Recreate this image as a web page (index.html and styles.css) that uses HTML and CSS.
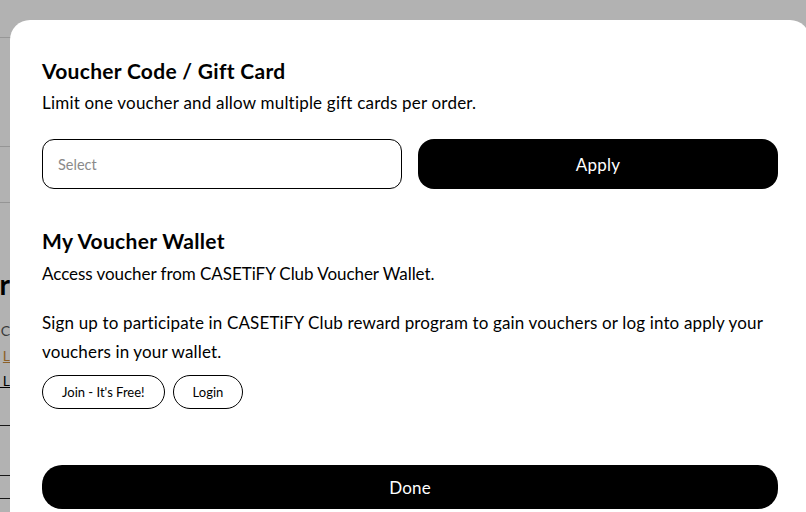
FILE: index.html
```html
<!DOCTYPE html>
<html>
<head>
<meta charset="utf-8">
<link rel="stylesheet" href="styles.css">
</head>
<body>
<div class="page">
  <div class="page-header"></div>
  <div class="page-strip">
    <div class="rule rule-light r1"></div>
    <div class="rule rule-light r2"></div>
    <div class="clip big"><span>Your Order Summar</span></div>
    <div class="clip small g1"><span>Sign in to your C</span></div>
    <div class="clip small g2"><span>or <u>L</u></span></div>
    <div class="clip small g3"><span><u>Login L</u></span></div>
    <div class="rule rule-dark r3"></div>
    <div class="rule rule-dark r4"></div>
    <div class="rule rule-dark r5"></div>
  </div>
</div>
<div class="overlay"></div>
<div class="modal">
  <h2 class="title">Voucher Code / Gift Card</h2>
  <p class="sub">Limit one voucher and allow multiple gift cards per order.</p>
  <div class="code-row">
    <div class="input"><span class="placeholder">Select</span></div>
    <button class="btn-black apply">Apply</button>
  </div>
  <h2 class="title title2">My Voucher Wallet</h2>
  <p class="sub sub2">Access voucher from CASETiFY Club Voucher Wallet.</p>
  <p class="para">Sign up to participate in CASETiFY Club reward program to gain vouchers or log into apply your vouchers in your wallet.</p>
  <div class="pills">
    <button class="pill">Join - It's Free!</button>
    <button class="pill">Login</button>
  </div>
  <button class="btn-black done">Done</button>
</div>
</body>
</html>
```
FILE: styles.css
```css
html, body {
  margin: 0;
  padding: 0;
  width: 806px;
  height: 512px;
  overflow: hidden;
  background: #fff;
  font-family: Lato, "Noto Sans", sans-serif;
}
.page {
  width: 806px;
  height: 512px;
}
.page-header {
  height: 37px;
  border-bottom: 1px solid #d8d8d8;
}
.page-strip {
  width: 10px;
  display: flex;
  flex-direction: column;
}
.rule { height: 1px; }
.rule-light { background: #d6d6d6; }
.rule-dark { background: #222; }
.r1 { margin-top: 108px; }
.r2 { margin-top: 55px; }
.clip {
  display: flex;
  justify-content: flex-end;
  overflow: hidden;
  white-space: nowrap;
}
.clip span { flex-shrink: 0; }
.big {
  margin-top: 66px;
  font-size: 28px;
  font-weight: 700;
  line-height: 30px;
  color: #000;
}
.small {
  font-size: 14px;
  line-height: 25px;
  color: #555;
}
.g1 { margin-top: 19px; }
.g2 u { color: #c98a3a; }
.g3 { color: #000; }
.r3 { margin-top: 32px; }
.r4 { margin-top: 49px; }
.r5 { margin-top: 22px; }

.overlay {
  position: fixed;
  inset: 0;
  background: rgba(0, 0, 0, 0.3);
}
.modal {
  position: absolute;
  left: 10px;
  top: 20px;
  width: 736px;
  height: 600px;
  padding: 36px 32px 0;
  background: #fff;
  border-radius: 20px 20px 0 0;
  color: #000;
}
.title {
  margin: 0;
  font-size: 21px;
  letter-spacing: 0.3px;
  line-height: 30px;
  font-weight: 700;
}
.title2 { margin-top: 37px; }
.sub {
  margin: 5px 0 0;
  font-size: 17px;
  letter-spacing: 0.2px;
  line-height: 24px;
}
.sub2 {
  margin-top: 6px;
  letter-spacing: -0.05px;
}
.code-row {
  display: grid;
  grid-template-columns: 1fr 1fr;
  gap: 16px;
  margin-top: 24px;
}
.input {
  height: 50px;
  box-sizing: border-box;
  border: 1px solid #000;
  border-radius: 12px;
  display: flex;
  align-items: center;
  padding: 0 15px;
}
.placeholder {
  font-size: 14.5px;
  color: #8a8a8a;
}
button {
  font-family: inherit;
  cursor: pointer;
}
.btn-black {
  background: #000;
  color: #fff;
  border: none;
  font-size: 17px;
  letter-spacing: 0.2px;
}
.apply {
  height: 50px;
  border-radius: 16px;
}
.para {
  margin: 22px 0 0;
  font-size: 17px;
  letter-spacing: 0.15px;
  line-height: 29px;
}
.pills {
  display: flex;
  gap: 8px;
  margin-top: 9px;
}
.pill {
  height: 34px;
  padding: 0 19px;
  border: 1px solid #000;
  border-radius: 17px;
  background: #fff;
  color: #000;
  font-size: 13px;
}
.done {
  display: block;
  width: 100%;
  height: 44px;
  margin-top: 56px;
  border-radius: 20px;
}
```
